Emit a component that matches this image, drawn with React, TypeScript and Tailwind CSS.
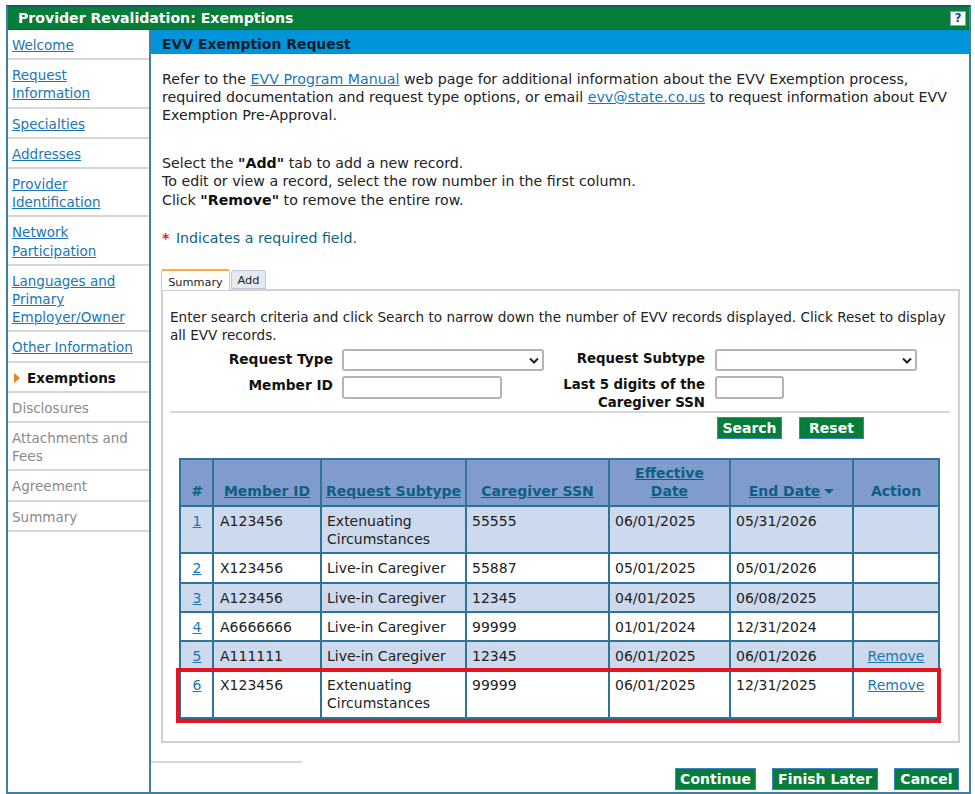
import React from 'react'

const navItems: { label: React.ReactNode; state: 'link' | 'current' | 'off' }[] = [
  { label: 'Welcome', state: 'link' },
  { label: <>Request<br />Information</>, state: 'link' },
  { label: 'Specialties', state: 'link' },
  { label: 'Addresses', state: 'link' },
  { label: <>Provider<br />Identification</>, state: 'link' },
  { label: <>Network<br />Participation</>, state: 'link' },
  { label: <>Languages and<br />Primary<br />Employer/Owner</>, state: 'link' },
  { label: 'Other Information', state: 'link' },
  { label: 'Exemptions', state: 'current' },
  { label: 'Disclosures', state: 'off' },
  { label: <>Attachments and<br />Fees</>, state: 'off' },
  { label: 'Agreement', state: 'off' },
  { label: 'Summary', state: 'off' },
]

const rows = [
  { n: 1, id: 'A123456', sub: <>Extenuating<br />Circumstances</>, ssn: '55555', from: '06/01/2025', to: '05/31/2026', remove: false, h: 'h-[47px]' },
  { n: 2, id: 'X123456', sub: 'Live-in Caregiver', ssn: '55887', from: '05/01/2025', to: '05/01/2026', remove: false, h: 'h-[30px]' },
  { n: 3, id: 'A123456', sub: 'Live-in Caregiver', ssn: '12345', from: '04/01/2025', to: '06/08/2025', remove: false, h: 'h-[29px]' },
  { n: 4, id: 'A6666666', sub: 'Live-in Caregiver', ssn: '99999', from: '01/01/2024', to: '12/31/2024', remove: false, h: 'h-[29px]' },
  { n: 5, id: 'A111111', sub: 'Live-in Caregiver', ssn: '12345', from: '06/01/2025', to: '06/01/2026', remove: true, h: 'h-[29px]' },
  { n: 6, id: 'X123456', sub: <>Extenuating<br />Circumstances</>, ssn: '99999', from: '06/01/2025', to: '12/31/2025', remove: true, h: 'h-[48px]' },
]

function GreenButton({ className, children }: { className: string; children: React.ReactNode }) {
  return (
    <button className={`h-[22px] bg-[#067d38] border border-[#3f7fd0] text-white font-bold text-[14px] leading-none ${className}`}>
      {children}
    </button>
  )
}

function Select() {
  return (
    <div className="w-[202px] h-[22px] -mt-px bg-white border-2 border-[#b4b4b4] rounded-[3px] flex items-center justify-end pr-[3px]">
      <svg width="10" height="7" viewBox="0 0 10 7"><path d="M1 1.5 L5 5.5 L9 1.5" fill="none" stroke="#222" strokeWidth="2" /></svg>
    </div>
  )
}

const linkCls = 'text-[#1a76b5] underline'
const thLink = 'text-[#0f5f85] underline font-bold'
const thCls = 'border-2 border-[#2f7396] align-bottom pb-[5px] text-center leading-[18.2px] font-bold'
const tdCls = 'border-2 border-[#2f7396] align-top pt-[5px] pl-[5px] text-[#222] leading-[18px]'

export default function App() {
  return (
    <div className="w-[975px] h-[794px] bg-white pt-[5px] pl-[6px] text-[14.2px] leading-[18.2px] text-[#222] font-['DejaVu_Sans','Verdana',sans-serif]">
      <div className="w-[965px] h-[789px] border-2 border-[#3f7f9f] border-t-[#0d5c66] flex flex-col">
        <div className="h-[23px] bg-[#067d38] flex items-center justify-between pl-[10px] pr-[3px] shrink-0 border-b border-[#0b5a5a]">
          <span className="text-white font-bold text-[14.1px]">Provider Revalidation: Exemptions</span>
          <span className="w-[16px] h-[15px] bg-white border border-[#7fa3bd] text-[#0f4f88] font-bold text-[12px] leading-[13px] text-center">?</span>
        </div>
        <div className="flex flex-1 min-h-0">
          <nav className="w-[143px] shrink-0 border-r-2 border-[#3f7f9f] text-[13.5px]">
            {navItems.map((item, i) => (
              <div key={i} className="pl-[4px] pt-[6px] pb-[4px] border-b-2 border-[#d6d6d6]">
                {item.state === 'link' && <a className={linkCls}>{item.label}</a>}
                {item.state === 'off' && <span className="text-[#8a8a8a]">{item.label}</span>}
                {item.state === 'current' && (
                  <span className="flex items-center font-bold text-[#111]">
                    <svg width="8" height="10" viewBox="0 0 8 10" className="ml-[1px] mr-[6px]"><path d="M1 0 L7 5 L1 10 Z" fill="#f07f1e" /></svg>
                    {item.label}
                  </span>
                )}
              </div>
            ))}
          </nav>
          <main className="flex-1 min-w-0 flex flex-col">
            <div className="h-[24px] bg-[#0094d9] pl-[11px] pt-[4px] flex items-center font-bold text-[13.95px] text-[#0b1a2a] shrink-0">EVV Exemption Request</div>
            <div className="pl-[11px] pr-[10px] pt-[16px] flex-1 flex flex-col">
              <p>
                Refer to the <a className={linkCls}>EVV Program Manual</a> web page for additional information about the EVV Exemption process,<br />
                required documentation and request type options, or email <a className={linkCls}>evv@state.co.us</a> to request information about EVV<br />
                Exemption Pre-Approval.
              </p>
              <p className="mt-[29.5px]">
                Select the <b className="text-[#111]">"Add"</b> tab to add a new record.<br />
                To edit or view a record, select the row number in the first column.<br />
                Click <b className="text-[#111]">"Remove"</b> to remove the entire row.
              </p>
              <p className="mt-[20.5px] text-[#0f6386]"><span className="text-[#e0202a] font-bold mr-[2px]">*</span> Indicates a required field.</p>

              <div className="mt-[20.6px] -ml-px flex items-end h-[21px] text-[11.3px]">
                <div className="h-[21px] w-[69px] pt-[5px] border-t-2 border-x border-[#f5b041] border-x-[#c8c8c8] rounded-t-[3px] bg-white flex items-center justify-center relative z-10 -mb-px">Summary</div>
                <div className="ml-px h-[19px] w-[35px] pt-[4px] border border-[#b9c4d4] rounded-t-[3px] bg-[#e6eaf0] flex items-center justify-center">Add</div>
              </div>
              <div className="-ml-px w-[799px] h-[454px] border-2 border-[#d0d0d0] pl-[7px] pr-[8px] pt-[17px]">
                <p className="text-[13.6px] whitespace-nowrap">Enter search criteria and click Search to narrow down the number of EVV records displayed. Click Reset to display<br />all EVV records.</p>
                <div className="grid grid-cols-[167px_201px_177px_1fr] mt-[6px] font-bold text-[13.75px] text-[#111]">
                  <div className="text-right pr-[4px]">Request Type</div>
                  <div className="pl-[5px]"><Select /></div>
                  <div className="text-right pr-[10px] text-[13.3px]">Request Subtype</div>
                  <div><Select /></div>
                  <div className="text-right pr-[4px] mt-[5px]">Member ID</div>
                  <div className="pl-[5px] mt-[5px]"><div className="w-[160px] h-[23px] border-2 border-[#b4b4b4] rounded-[3px]" /></div>
                  <div className="text-right pr-[10px] mt-[5px] whitespace-nowrap text-[13.3px] leading-[18px]">Last 5 digits of the<br />Caregiver SSN</div>
                  <div className="mt-[5px]"><div className="w-[69px] h-[23px] border-2 border-[#b4b4b4] rounded-[3px]" /></div>
                </div>
                <div className="border-t-2 border-[#d6d6d6] -mt-[1.5px] mb-[4.5px]" />
                <div className="flex gap-[17px] pl-[547px]">
                  <GreenButton className="w-[65px]">Search</GreenButton>
                  <GreenButton className="w-[65px]">Reset</GreenButton>
                </div>
                <div className="relative mt-[18.5px] ml-[9px] w-[761px] text-[14px]">
                  <table className="w-[761px] table-fixed border-collapse">
                    <thead>
                      <tr className="h-[47px] bg-[#7f9ccc]">
                        <th className={`${thCls} w-[33px] pl-px text-[#0f5f85]`}>#</th>
                        <th className={`${thCls} w-[108px]`}><a className={thLink}>Member ID</a></th>
                        <th className={`${thCls} w-[145px]`}><a className={thLink}>Request Subtype</a></th>
                        <th className={`${thCls} w-[143px]`}><a className={thLink}>Caregiver SSN</a></th>
                        <th className={`${thCls} w-[121px]`}><a className={thLink}>Effective<br />Date</a></th>
                        <th className={`${thCls} w-[123px]`}>
                          <a className={thLink}>End Date</a>
                          <svg width="10" height="5" viewBox="0 0 10 5" className="inline-block ml-[4px]"><path d="M0 0 H10 L5 5 Z" fill="#0f5f85" /></svg>
                        </th>
                        <th className={`${thCls} text-[#0f5f85]`}>Action</th>
                      </tr>
                    </thead>
                    <tbody>
                      {rows.map(r => (
                        <tr key={r.n} className={`${r.h} ${r.n % 2 === 1 ? 'bg-[#cdd9ec]' : 'bg-white'}`}>
                          <td className="border-2 border-[#2f7396] align-top pt-[5px] pl-px text-center leading-[18px]"><a className={linkCls}>{r.n}</a></td>
                          <td className="border-2 border-[#2f7396] align-top pt-[5px] pl-[6px] text-[#222] leading-[18px]">{r.id}</td>
                          <td className={tdCls}>{r.sub}</td>
                          <td className={tdCls}>{r.ssn}</td>
                          <td className={tdCls}>{r.from}</td>
                          <td className={tdCls}>{r.to}</td>
                          <td className="border-2 border-[#2f7396] align-top pt-[5px] text-center leading-[18px]">{r.remove && <a className={linkCls}>Remove</a>}</td>
                        </tr>
                      ))}
                    </tbody>
                  </table>
                  <div className="absolute left-[-3px] right-[-1px] bottom-[-4px] h-[55px] border-4 border-[#e3141f] pointer-events-none" />
                </div>
              </div>
              <div className="relative flex-1">
                <div className="absolute left-[-11px] top-[18px] w-[151px] border-t-2 border-[#d6d6d6]" />
                <div className="absolute right-[0px] bottom-[2px] flex gap-[16px]">
                  <GreenButton className="w-[81px]">Continue</GreenButton>
                  <GreenButton className="w-[106px]">Finish Later</GreenButton>
                  <GreenButton className="w-[65px]">Cancel</GreenButton>
                </div>
              </div>
            </div>
          </main>
        </div>
      </div>
    </div>
  )
}
